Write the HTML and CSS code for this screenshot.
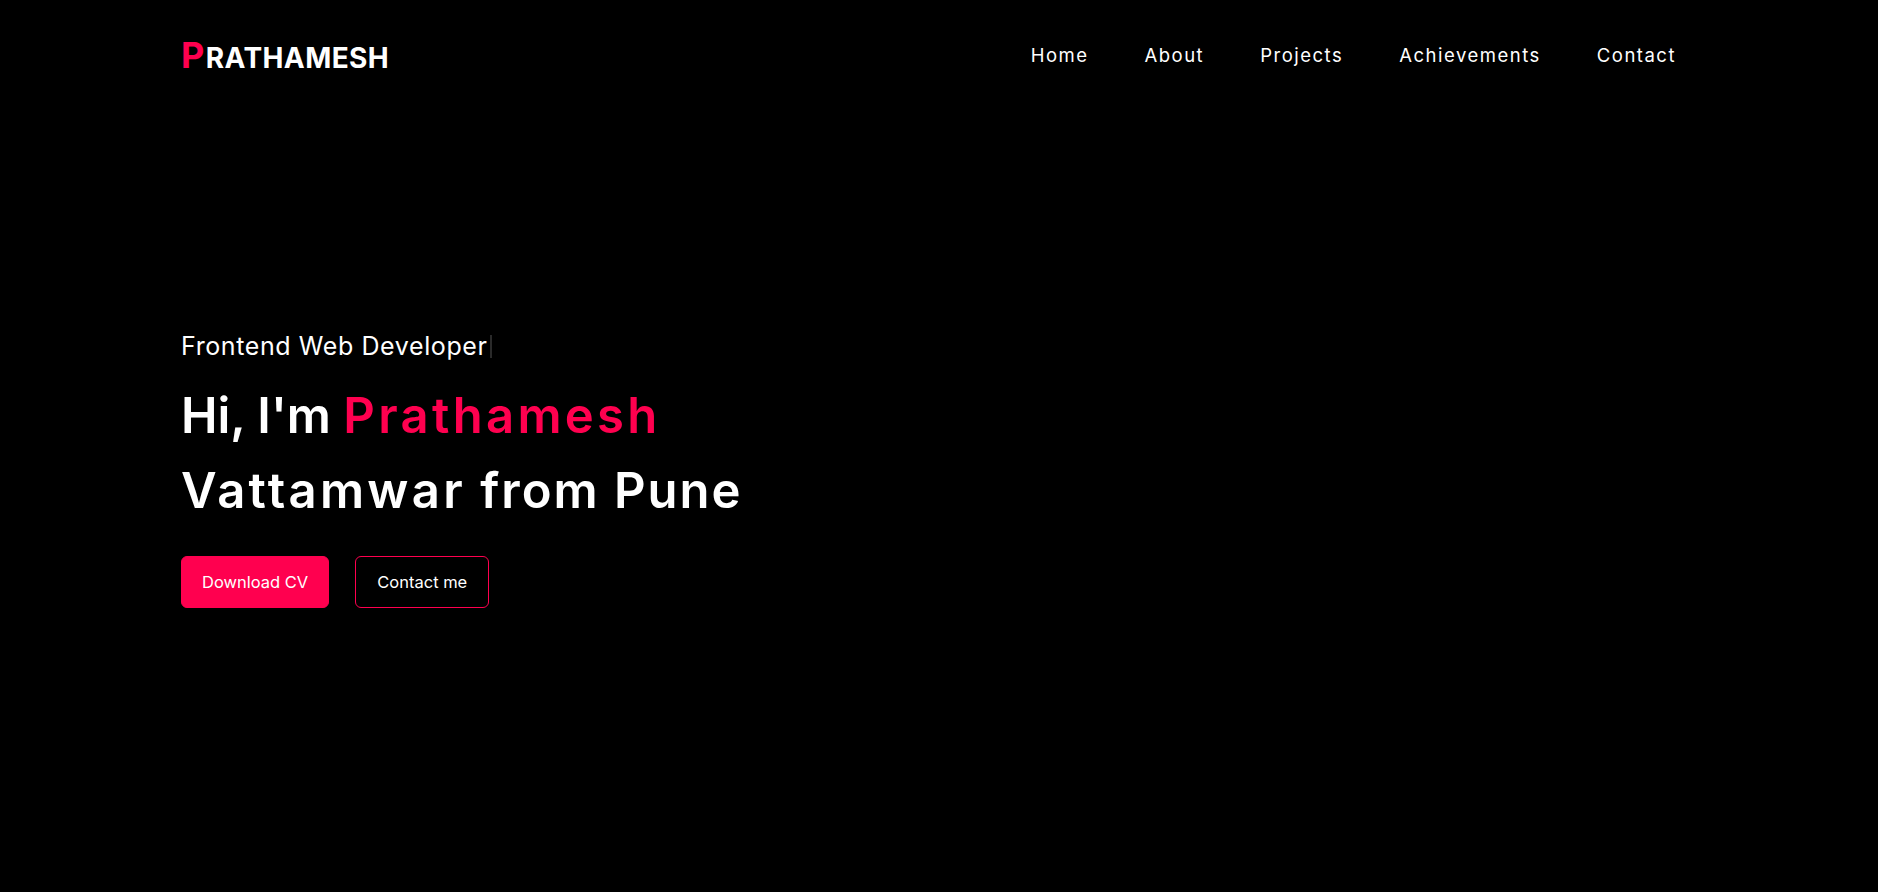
FILE: index.html
```html
<!DOCTYPE html>
<html lang="en">
<head>
<meta charset="utf-8">
<title>Prathamesh</title>
<link rel="stylesheet" href="styles.css">
</head>
<body>
<header class="header">
  <nav class="nav">
    <a class="logo" href="#"><span class="logo-first">P</span>RATHAMESH</a>
    <ul class="menu">
      <li><a href="#">Home</a></li>
      <li><a href="#">About</a></li>
      <li><a href="#">Projects</a></li>
      <li><a href="#">Achievements</a></li>
      <li><a href="#">Contact</a></li>
    </ul>
  </nav>
  <section class="hero">
    <p class="role">Frontend Web Developer<span class="caret"></span></p>
    <h1 class="title"><span class="tight">Hi, I'm </span><span class="accent stretch">Prathamesh</span><br><span class="stretch">Vattamwar</span> from Pune</h1>
    <div class="actions">
      <a class="btn btn-fill" href="#">Download CV</a>
      <a class="btn btn-outline" href="#">Contact me</a>
    </div>
  </section>
</header>
</body>
</html>
```
FILE: styles.css
```css
* { box-sizing: border-box; }
html, body { margin: 0; padding: 0; }
body {
  background: #000;
  color: #fff;
  font-family: "Inter", "Noto Sans", sans-serif;
  min-height: 892px;
}
a { color: inherit; text-decoration: none; }

.header { padding: 0 202px 0 181px; }

.nav {
  height: 110px;
  display: flex;
  align-items: center;
  justify-content: space-between;
}
.logo {
  font-size: 28px;
  font-weight: 700;
  letter-spacing: 0.4px;
  line-height: normal;
}
.logo-first {
  font-size: 36px;
  color: #ff004f;
  letter-spacing: 1.5px;
}
.menu {
  list-style: none;
  margin: 0;
  padding: 0;
  display: flex;
  gap: 56px;
}
.menu a {
  font-size: 18.5px;
  letter-spacing: 1.5px;
  line-height: 24px;
}

.hero { padding-top: 221px; }
.role {
  margin: 0;
  font-size: 25px;
  line-height: 30px;
  letter-spacing: 0.6px;
  display: flex;
  align-items: center;
}
.caret {
  display: inline-block;
  width: 2px;
  height: 23px;
  margin-left: 2px;
  background: #2a2a2a;
}
.title {
  margin: 17px 0 0;
  font-size: 49px;
  font-weight: 600;
  line-height: 75px;
  letter-spacing: 2px;
}
.tight { letter-spacing: 0; }
.stretch { letter-spacing: 3.3px; }
.accent { color: #ff004f; }

.actions {
  margin-top: 28px;
  display: flex;
  gap: 26px;
}
.btn {
  height: 52px;
  padding: 0 20px;
  border-radius: 6px;
  font-size: 16.5px;
  display: inline-flex;
  align-items: center;
  border: 1px solid #ff004f;
}
.btn-fill { background: #ff004f; }
.btn-outline { background: transparent; padding: 0 21px; }
```
